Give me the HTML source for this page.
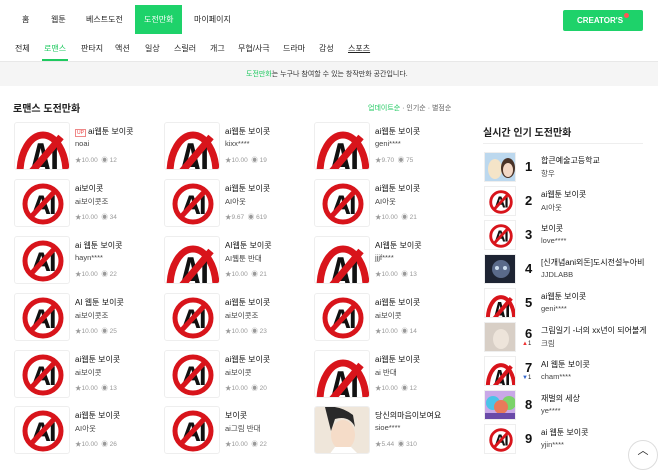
<!DOCTYPE html>
<html><head><meta charset="utf-8"><style>
*{margin:0;padding:0;box-sizing:border-box}
body{width:658px;height:457px;overflow:hidden;background:#fff;font-family:"Liberation Sans","Noto Sans CJK KR",sans-serif;color:#222;position:relative}
.a{position:absolute;white-space:nowrap}
.nav{font-size:8px;color:#222}
.th{position:absolute;width:56px;height:48px;border:1px solid #eee;border-radius:3px;overflow:hidden;background:#fff}
.t1{font-size:8px;color:#111}
.t2{font-size:7.5px;color:#444}
.t3{font-size:6.5px;color:#999}
.rk{font-size:13px;font-weight:bold;color:#111}
</style></head><body>
<div class="a nav" style="left:22px;top:14px">홈</div>
<div class="a nav" style="left:51px;top:14px">웹툰</div>
<div class="a nav" style="left:86px;top:14px">베스트도전</div>
<div class="a" style="left:135px;top:5px;width:47px;height:29px;background:#1ed26a"></div>
<div class="a nav" style="left:144px;top:14px;color:#fff">도전만화</div>
<div class="a nav" style="left:194px;top:14px">마이페이지</div>
<div class="a" style="left:563px;top:10px;width:80px;height:21px;background:#1ed26a;border-radius:2px;color:#fff;font-size:8px;font-weight:bold;text-align:center;line-height:21px">CREATOR'S<span style="display:inline-block;width:5px;height:5px;border-radius:50%;background:#f55;vertical-align:5px;margin-left:1px"></span></div>
<div class="a nav" style="left:15px;top:43px">전체</div>
<div class="a nav" style="left:44px;top:43px;color:#1ec95f">로맨스</div>
<div class="a" style="left:42px;top:59px;width:26px;height:2px;background:#1ec95f"></div>
<div class="a nav" style="left:81px;top:43px">판타지</div>
<div class="a nav" style="left:115px;top:43px">액션</div>
<div class="a nav" style="left:145px;top:43px">일상</div>
<div class="a nav" style="left:174px;top:43px">스릴러</div>
<div class="a nav" style="left:210px;top:43px">개그</div>
<div class="a nav" style="left:238px;top:43px">무협/사극</div>
<div class="a nav" style="left:283px;top:43px">드라마</div>
<div class="a nav" style="left:319px;top:43px">감성</div>
<div class="a nav" style="left:348px;top:43px;text-decoration:underline">스포츠</div>
<div class="a" style="left:0;top:61px;width:658px;height:25px;background:#f5f5f5;border-top:1px solid #e8e8e8"></div>
<div class="a" style="left:246px;top:69px;font-size:7px;color:#333"><span style="color:#1ec95f">도전만화</span>는 누구나 참여할 수 있는 창작만화 공간입니다.</div>
<div class="a" style="left:13px;top:100px;font-size:10px;font-weight:bold">로맨스 도전만화</div>
<div class="a" style="left:368px;top:103px;font-size:7px;color:#666"><span style="color:#1ec95f">업데이트순</span> · 인기순 · 별점순</div>
<div id="g"></div>
<script>
var A='<svg width="56" height="48" viewBox="0 0 56 48"><circle cx="28" cy="24" r="18" fill="none" stroke="#d8141b" stroke-width="5"/><text x="28" y="34" font-family="Liberation Sans" font-weight="bold" font-size="27" text-anchor="middle" fill="#111" letter-spacing="-2">AI</text><line x1="40" y1="11" x2="15" y2="38" stroke="#d8141b" stroke-width="5"/></svg>';
var B='<svg width="56" height="48" viewBox="0 0 56 48"><ellipse cx="28" cy="50" rx="23" ry="38" fill="none" stroke="#d8141b" stroke-width="7"/><text x="0" y="0" transform="translate(28 52) scale(0.7 1)" font-family="Liberation Sans" font-weight="bold" font-size="46" text-anchor="middle" fill="#111" letter-spacing="-3">AI</text><line x1="46" y1="14" x2="14" y2="52" stroke="#d8141b" stroke-width="7"/></svg>';
var M='<svg width="56" height="48"><rect width="56" height="48" fill="#efe6da"/><path d="M10 0 Q25 -2 38 8 L40 20 Q34 8 20 12 L16 24 Z" fill="#2a2a2a"/><ellipse cx="28" cy="28" rx="12" ry="15" fill="#f5dcc8"/><path d="M14 48 L20 40 L36 40 L44 48Z" fill="#fff"/></svg>';
var d=[
[[B,'<span style="color:#e44;border:1px solid #e88;font-size:5px;padding:0 1px">UP</span> ai웹툰 보이콧','noai','10.00','12'],[B,'ai웹툰 보이콧','kixx****','10.00','19'],[B,'ai웹툰 보이콧','geni****','9.70','75']],
[[A,'ai보이콧','ai보이콧조','10.00','34'],[A,'ai웹툰 보이콧','AI아웃','9.67','619'],[A,'ai웹툰 보이콧','AI아웃','10.00','21']],
[[A,'ai 웹툰 보이콧','hayn****','10.00','22'],[B,'AI웹툰 보이콧','AI웹툰 반대','10.00','21'],[B,'AI웹툰 보이콧','jjjf****','10.00','13']],
[[A,'AI 웹툰 보이콧','ai보이콧조','10.00','25'],[A,'ai웹툰 보이콧','ai보이콧조','10.00','23'],[A,'ai웹툰 보이콧','ai보이콧','10.00','14']],
[[A,'ai웹툰 보이콧','ai보이콧','10.00','13'],[A,'ai웹툰 보이콧','ai보이콧','10.00','20'],[B,'ai웹툰 보이콧','ai 반대','10.00','12']],
[[A,'ai웹툰 보이콧','AI아웃','10.00','26'],[A,'보이콧','ai그림 반대','10.00','22'],[M,'당신의마음이보여요','sioe****','5.44','310']]];
var ys=[122,179,236,293,350,406],xs=[14,164,314],h='';
d.forEach(function(r,i){r.forEach(function(c,j){var x=xs[j],y=ys[i];
h+='<div class="th" style="left:'+x+'px;top:'+y+'px">'+c[0]+'</div>';
h+='<div class="a t1" style="left:'+(x+61)+'px;top:'+(y+4)+'px">'+c[1]+'</div>';
h+='<div class="a t2" style="left:'+(x+61)+'px;top:'+(y+17)+'px">'+c[2]+'</div>';
h+='<div class="a t3" style="left:'+(x+61)+'px;top:'+(y+32)+'px">★'+c[3]+' &nbsp;◉ '+c[4]+'</div>';});});
var P1='<svg width="32" height="30"><rect width="32" height="30" fill="#bcd8ee"/><ellipse cx="10" cy="16" rx="7" ry="10" fill="#f4e4c8"/><ellipse cx="23" cy="15" rx="7" ry="10" fill="#4a3328"/><ellipse cx="23" cy="17" rx="5" ry="7" fill="#f3d8c6"/></svg>';
var P4='<svg width="32" height="30"><rect width="32" height="30" fill="#1e2433"/><circle cx="16" cy="14" r="9" fill="#5a6a8a"/><circle cx="12" cy="13" r="2" fill="#cde"/><circle cx="20" cy="13" r="2" fill="#cde"/></svg>';
var P6='<svg width="32" height="30"><rect width="32" height="30" fill="#d8cfc6"/><ellipse cx="16" cy="16" rx="8" ry="10" fill="#ede4da"/></svg>';
var P8='<svg width="32" height="30"><rect width="32" height="30" fill="#c9a8e8"/><circle cx="8" cy="12" r="7" fill="#4bc3e8"/><circle cx="24" cy="12" r="7" fill="#7bd36a"/><circle cx="16" cy="16" r="7" fill="#e87a5a"/><rect y="22" width="32" height="8" fill="#6a4aa8"/></svg>';
var a=A.replace('width="56" height="48"','width="32" height="30"'),b=B.replace('width="56" height="48"','width="32" height="30"');
var R=[[P1,'합큰예술고등학교','항우',''],[a,'ai웹툰 보이콧','AI아웃',''],[a,'보이콧','love****',''],[P4,'[신개념ani외돈]도시전설누아비','JJDLABB',''],[b,'ai웹툰 보이콧','geni****',''],[P6,'그림일기 -너의 xx년이 되어볼게','크림','<span style="color:#e33">▲</span>1'],[b,'AI 웹툰 보이콧','cham****','<span style="color:#36c">▼</span>1'],[P8,'재벌의 세상','ye****',''],[a,'ai 웹툰 보이콧','yjin****','']];
h+='<div class="a" style="left:483px;top:124px;font-size:10px;font-weight:bold">실시간 인기 도전만화</div><div class="a" style="left:483px;top:143px;width:160px;height:1px;background:#eee"></div>';
R.forEach(function(r,i){var y=152+i*34;
h+='<div class="a" style="left:484px;top:'+y+'px;width:32px;height:30px;border:1px solid #eee;overflow:hidden">'+r[0]+'</div>';
h+='<div class="a rk" style="left:525px;top:'+(y+(r[3]?4:7))+'px">'+(i+1)+'</div>';
if(r[3])h+='<div class="a" style="left:522px;top:'+(y+19)+'px;font-size:6px">'+r[3]+'</div>';
h+='<div class="a t1" style="left:541px;top:'+(y+3)+'px">'+r[1]+'</div><div class="a t2" style="left:541px;top:'+(y+16)+'px">'+r[2]+'</div>';});
h+='<div class="a" style="left:628px;top:440px;width:30px;height:30px;border-radius:50%;border:1px solid #ddd;background:#fff;text-align:center;font-size:11px;line-height:20px">︿</div>';
document.getElementById('g').innerHTML=h;
</script>
</body></html>
